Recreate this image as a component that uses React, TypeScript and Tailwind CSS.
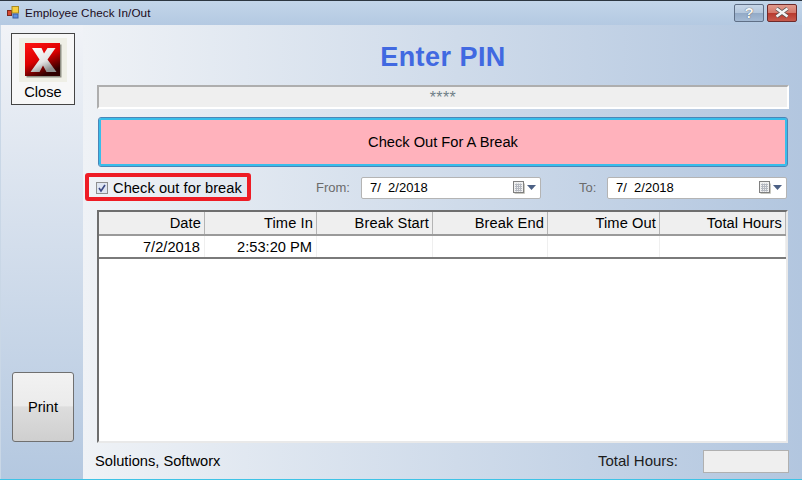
const columns = [
  { label: "Date", width: "w-[106px]", value: "7/2/2018" },
  { label: "Time In", width: "w-[112px]", value: "2:53:20 PM" },
  { label: "Break Start", width: "w-[116px]", value: "" },
  { label: "Break End", width: "w-[115px]", value: "" },
  { label: "Time Out", width: "w-[112px]", value: "" },
  { label: "Total Hours", width: "w-[126px]", value: "" },
];

function CalendarIcon() {
  return (
    <svg width="24" height="14" viewBox="0 0 24 14">
      <path d="M1.5 12.5h10v-10" fill="none" stroke="#c8c8c0" />
      <rect x="0.5" y="0.5" width="10" height="11" fill="#f0f0f0" stroke="#808080" />
      <path d="M2 3.5h7M2 5.5h7M2 7.5h7M2 9.5h7M3.5 2.500v8M5.500 2.500v8M7.500 2.500v8" stroke="#b4b8c0" strokeWidth="1" />
      <path d="M14 4h9l-4.500 5z" fill="#4d6185" />
    </svg>
  );
}

function DateField({ value, className }: { value: string; className: string }) {
  return (
    <div className={`flex items-center justify-between h-[22px] mt-[1px] bg-white border border-[#b4b4b4] rounded-[2px] pl-[8px] pr-[3px] text-[13px] text-black ${className}`}>
      <span className="whitespace-pre">{value}</span>
      <CalendarIcon />
    </div>
  );
}

function CloseGlyph() {
  return (
    <svg width="37" height="35" viewBox="0 0 37 35">
      <defs>
        <linearGradient id="redFace" x1="0" y1="0" x2="0.5" y2="1">
          <stop offset="0" stopColor="#ff1414" />
          <stop offset="0.55" stopColor="#dc0000" />
          <stop offset="1" stopColor="#300000" />
        </linearGradient>
        <linearGradient id="xFace" x1="0" y1="0" x2="0.5" y2="1">
          <stop offset="0" stopColor="#ffffff" />
          <stop offset="0.65" stopColor="#e4e4e4" />
          <stop offset="1" stopColor="#909090" />
        </linearGradient>
      </defs>
      <rect x="1.500" y="1.500" width="35" height="33" fill="#8f8f84" />
      <rect x="0" y="0" width="35" height="33" fill="url(#redFace)" />
      <path d="M7 5h9.500l2.500 5.500L22.500 5h8l-8 11.500L31.500 29h-10L18 22.500 14.500 29H5.500l9-12.500z" fill="url(#xFace)" />
    </svg>
  );
}

export default function App() {
  return (
    <div className="w-[802px] h-[480px] flex flex-col overflow-hidden bg-[#b9cbe2] font-['Liberation_Sans',sans-serif] border-b border-[#3ec3e6]">
      <div className="h-[25px] shrink-0 flex items-center justify-between bg-gradient-to-b from-[#c2d5e9] to-[#b4c9e2] pl-[7px] pr-[5px] border-t border-[#2b3640]">
        <div className="flex items-center gap-[5px]">
          <svg width="13" height="13" viewBox="0 0 13 13">
            <rect x="0.5" y="4.5" width="4" height="5" fill="#d84a30" stroke="#7a2a20" />
            <rect x="5" y="0.5" width="6.5" height="6.5" fill="#f6cf3e" stroke="#a88a20" />
            <rect x="6" y="8" width="5" height="4" fill="#5e8fe0" stroke="#3a5fa0" />
          </svg>
          <span className="text-[11.7px] text-[#1a0a20] tracking-[0.1px]">Employee Check In/Out</span>
        </div>
        <div className="flex items-center gap-[3px] -mt-[1px]">
          <div className="w-[30px] h-[18px] flex items-center justify-center rounded-[2px] border border-[#5f6f86] bg-[linear-gradient(#c6d6e8_0%,#b4c7dc_48%,#93aac6_52%,#a4bad4_100%)] text-[#f4f6f8] font-bold text-[15px] leading-none [text-shadow:0_0_1px_#303030]">
            ?
          </div>
          <div className="w-[30px] h-[18px] flex items-center justify-center rounded-[2px] border border-[#6e2a2a] bg-[linear-gradient(#e09a8c_0%,#d4786a_48%,#b83a2e_52%,#c65a4c_100%)]">
            <svg width="16" height="11" viewBox="0 0 16 11">
              <path d="M2.500 1.500L13.500 9.500M13.500 1.500L2.500 9.500" stroke="#505050" strokeWidth="4" />
              <path d="M2.500 1.500L13.500 9.500M13.500 1.500L2.500 9.500" stroke="#f4f4f4" strokeWidth="2.600" />
            </svg>
          </div>
        </div>
      </div>

      <div className="flex flex-1 min-h-0">
        <div className="w-[83px] shrink-0 flex flex-col justify-between items-center bg-gradient-to-b from-[#f1f3f7] to-[#b4c8e0] pt-[8px] pb-[37px] pl-[2px] border-l border-[#c9d7e6]">
          <div className="w-[64px] h-[72px] border border-[#444444] bg-[#f7f7f7] flex flex-col items-center">
            <div className="mt-[4px] w-[48px] h-[44px] bg-[#efefe6] flex items-center justify-center">
              <CloseGlyph />
            </div>
            <span className="text-[14.67px] leading-[16px] mt-[2px] text-black">Close</span>
          </div>
          <div className="w-[62px] h-[70px] rounded-[3px] border border-[#707070] bg-[linear-gradient(#f2f2f2_0%,#ebebeb_48%,#dddddd_50%,#cfcfcf_100%)] flex items-center justify-center text-[14.67px] text-black">
            Print
          </div>
        </div>

        <div className="flex-1 min-w-0 flex flex-col pl-[14px] pr-[13px] bg-gradient-to-r from-[#eff2f6] to-[#b2c6df]">
          <div className="h-[60px] flex items-center justify-center text-[27px] font-bold text-[#4169e1] tracking-[0.45px] pt-[4px]">
            Enter PIN
          </div>
          <div className="h-[24px] border-2 border-t-[#aeaeae] border-l-[#aeaeae] border-r-white border-b-white bg-[#efefef] flex items-center justify-center text-[16px] text-[#6f7f88] pt-[1px] tracking-[0.4px]">
            ****
          </div>
          <div className="mt-[9px] mx-[2px] h-[48px] rounded-[2px] border-2 border-[#38bdea] outline outline-1 outline-[#4a86b8] bg-[#ffb2bc] flex items-center justify-center text-[14.67px] text-black">
            Check Out For A Break
          </div>

          <div className="mt-[7px] flex items-center -ml-[12px] h-[28px]">
            <div className="w-[166px] h-[28px] border-[4px] border-[#ee1c25] rounded-[3px] flex items-center pl-[7px] gap-[5px]">
              <div className="w-[12px] h-[12px] mt-[1px] border border-[#8e8f8f] bg-[#dfe6f2] flex items-center justify-center">
                <svg width="10" height="10" viewBox="0 0 10 10">
                  <path d="M2 5l2 3 4-6" fill="none" stroke="#3c4a84" strokeWidth="1.6" />
                </svg>
              </div>
              <span className="text-[14.67px] text-black whitespace-nowrap pt-[1px] tracking-[0.05px]">Check out for break</span>
            </div>
            <span className="ml-[65px] text-[13px] text-[#6b6b6b] w-[45px] pt-[2px]">From:</span>
            <DateField value="7/  2/2018" className="w-[180px]" />
            <span className="ml-[38px] text-[13px] text-[#6b6b6b] w-[28px] pt-[2px]">To:</span>
            <DateField value="7/  2/2018" className="w-[180px]" />
          </div>

          <div className="mt-[9px] h-[233px] mr-[1px] border-t-2 border-l-2 border-[#6e6e6e] border-r-2 border-r-[#e9e9e9] border-b-2 border-b-[#e9e9e9] bg-white flex flex-col">
            <div className="h-[24px] flex bg-[#efefef] border-b-2 border-[#9a9a9a] shrink-0">
              {columns.map((col) => (
                <div
                  key={col.label}
                  className={`${col.width} shrink-0 flex items-center justify-end pr-[3px] text-[14.67px] text-black border-r border-[#b4b4b4] whitespace-nowrap tracking-[0.1px]`}
                >
                  {col.label}
                </div>
              ))}
            </div>
            <div className="h-[23px] flex border-b-2 border-[#7a7a7a] shrink-0">
              {columns.map((col) => (
                <div
                  key={col.label}
                  className={`${col.width} shrink-0 flex items-center justify-end pr-[4px] text-[14.67px] text-black border-r border-[#efefef] whitespace-nowrap`}
                >
                  {col.value}
                </div>
              ))}
            </div>
          </div>

          <div className="flex-1 flex items-center justify-between -ml-[2px] text-[14.67px] text-black">
            <span>Solutions, Softworx</span>
            <div className="flex items-center">
              <span className="text-[#1c1c1c] text-[15px]">Total Hours:</span>
              <div className="ml-[25px] w-[86px] h-[23px] bg-[#efefef] border border-[#b0b0b0]" />
            </div>
          </div>
        </div>
      </div>
    </div>
  );
}
